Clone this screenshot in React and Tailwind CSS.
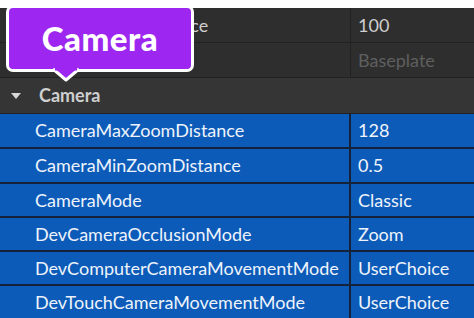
import React from 'react';

const font = { fontFamily: '"Lato", "Noto Sans", sans-serif' };

const cameraProps = [
  ['CameraMaxZoomDistance', '128', 'h-[35px]'],
  ['CameraMinZoomDistance', '0.5', 'h-[35px]'],
  ['CameraMode', 'Classic', 'h-[34px]'],
  ['DevCameraOcclusionMode', 'Zoom', 'h-[34px]'],
  ['DevComputerCameraMovementMode', 'UserChoice', 'h-[34px]'],
  ['DevTouchCameraMovementMode', 'UserChoice', 'h-[34px]'],
];

const DarkRow = ({ name, value, muted }) => (
  <div className="flex h-[35px] bg-[#2e2e2e] border-b border-[#222]">
    <div className="w-[351px] shrink-0 border-r border-[#222] pl-[35px] flex items-center text-[#cfcfcf] whitespace-nowrap">
      {name}
    </div>
    <div className={`pl-[7px] flex items-center ${muted ? 'text-[#5f5f5f]' : 'text-[#cfcfcf]'}`}>
      {value}
    </div>
  </div>
);

const BlueRow = ({ name, value, h }) => (
  <div className={`flex ${h} bg-[#0c5bb8] border-b-2 border-[#15233a]`}>
    <div className="w-[351px] shrink-0 border-r-2 border-[#15233a] pl-[35px] flex items-center text-[#eef3fb] whitespace-nowrap">
      {name}
    </div>
    <div className="pl-[7px] flex items-center text-[#eef3fb]">{value}</div>
  </div>
);

export default function App() {
  return (
    <div className="relative w-[474px] h-[318px] overflow-hidden bg-white text-[18px]" style={font}>
      <div className="h-[8px]" />
      <DarkRow name="NameDisplayDistance" value="100" />
      <DarkRow name="Parent" value="Baseplate" muted />
      <div className="flex items-center h-[36px] bg-[#353535] border-b border-[#222]">
        <svg width="12" height="8" viewBox="0 0 12 8" className="ml-[10px]">
          <path d="M1 1h10L6 7z" fill="#d8d8d8" />
        </svg>
        <span className="ml-[17px] font-bold text-[#cfcfcf]">Camera</span>
      </div>
      {cameraProps.map(([n, v, h]) => (
        <BlueRow key={n} name={n} value={v} h={h} />
      ))}

      <div className="absolute left-[6px] top-[5px]">
        <div className="w-[188px] h-[67px] rounded-[7px] bg-[#9d27f0] border-[3px] border-white flex items-center justify-center">
          <span className="text-white font-black text-[33px] leading-none tracking-[0.5px]">Camera</span>
        </div>
        <svg width="30" height="15" viewBox="0 0 30 15" className="absolute left-[45px] top-[62px]">
          <path d="M2 2 L15 13 L28 2" fill="#9d27f0" stroke="white" strokeWidth="3" strokeLinejoin="round" />
          <rect x="4" y="0" width="22" height="3.5" fill="#9d27f0" />
        </svg>
      </div>
    </div>
  );
}
